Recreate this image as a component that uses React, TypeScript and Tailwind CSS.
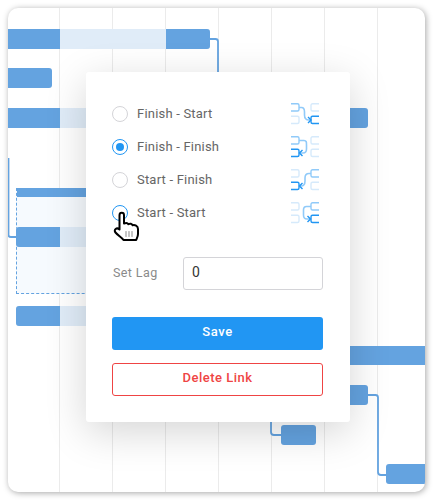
import React from "react";

const font = { fontFamily: 'Roboto, "Noto Sans", sans-serif' };

function LinkIcon({ kind }: { kind: 0 | 1 | 2 | 3 }) {
  const strong = "#2196f3";
  const mid = "#90caf9";
  const faint = "#d6eafb";
  const tl = kind === 0 || kind === 1 ? mid : faint;
  const bl = kind === 1 || kind === 2 ? strong : faint;
  const tr = kind === 2 || kind === 3 ? mid : faint;
  const br = kind === 0 || kind === 3 ? strong : faint;
  const leftBox = (y: number) => `M0 ${y}H6.5a1.5 1.5 0 0 1 1.5 1.5V${y + 5.8}a1.5 1.5 0 0 1-1.5 1.5H0`;
  const rightBox = (y: number) => `M28 ${y}H21.5a1.5 1.5 0 0 0-1.5 1.5V${y + 5.8}a1.5 1.5 0 0 0 1.5 1.5H28`;
  const curves = [
    "M8 4.5H10.5C13 4.5 13.5 6 13.5 9V12C13.5 15 15 17 18 17H20",
    "M8 4.5H13C15.5 4.5 15.5 6 15.5 9V13C15.5 16 14 17 12 17H8.5",
    "M20 4.5H18C15 4.5 14 6 14 9V12C14 15 13 17 10 17H8.5",
    "M20 4.5H15.5C13.5 4.5 12.5 6 12.5 8V13C12.5 16 14 17 16 17H19.5",
  ];
  const arrows = [
    "M17 14L20 17L17 20",
    "M11.5 14L8.5 17L11.5 20",
    "M11.5 14L8.5 17L11.5 20",
    "M16.5 14L19.5 17L16.5 20",
  ];
  return (
    <svg width="28" height="22" viewBox="0 0 28 22" fill="none" strokeWidth="1.4">
      <path d={leftBox(0.7)} stroke={tl} />
      <path d={leftBox(13.2)} stroke={bl} />
      <path d={rightBox(0.7)} stroke={tr} />
      <path d={rightBox(13.2)} stroke={br} />
      <path d={curves[kind]} stroke={mid} strokeWidth="1.6" />
      <path d={arrows[kind]} stroke={strong} />
    </svg>
  );
}

function Option({ label, kind, state }: { label: string; kind: 0 | 1 | 2 | 3; state: "off" | "on" | "hover" }) {
  return (
    <div className="flex h-[33px] items-center">
      {state === "off" && <span className="h-4 w-4 rounded-full border border-[#d4d4d8] bg-white" />}
      {state === "hover" && <span className="h-4 w-4 rounded-full border border-[#2196f3] bg-white" />}
      {state === "on" && (
        <span className="flex h-4 w-4 items-center justify-center rounded-full border border-[#2196f3] bg-white">
          <span className="h-2 w-2 rounded-full bg-[#2196f3]" />
        </span>
      )}
      <span className="ml-[9px] flex-1 pt-[1px] text-[13px] tracking-[0.2px] text-[#666666]">{label}</span>
      <span className="mr-[5px] flex">
        <LinkIcon kind={kind} />
      </span>
    </div>
  );
}

export default function App() {
  return (
    <div className="h-[500px] w-[433px] bg-white p-2" style={font}>
      <div className="relative h-full w-full overflow-hidden rounded-[10px] bg-white shadow-[1px_1px_6px_rgba(0,0,0,0.35)]">
        {/* grid columns */}
        <div className="flex h-full pl-[51px]">
          <div className="h-full w-[53px] border-l border-[#ebebeb]" />
          <div className="h-full w-[53px] border-l border-[#ebebeb]" />
          <div className="h-full w-[53px] border-l border-[#ebebeb]" />
          <div className="h-full w-[53px] border-l border-[#ebebeb]" />
          <div className="h-full w-[53px] border-l border-[#ebebeb]" />
          <div className="h-full w-[53px] border-l border-[#ebebeb]" />
          <div className="h-full w-[48px] border-l border-[#ebebeb]" />
        </div>

        <div className="absolute left-0 top-[21px] flex h-5 w-[202px] overflow-hidden rounded-r-[3px] bg-[#e0ecf8]">
          <div className="w-[52px] bg-[#64a3e0]" />
          <div className="flex-1" />
          <div className="w-11 bg-[#64a3e0]" />
        </div>
        <div className="absolute left-0 top-[60px] h-5 w-11 rounded-r-[3px] bg-[#64a3e0]" />
        <div className="absolute left-0 top-[100px] flex h-5 w-[300px] bg-[#e0ecf8]">
          <div className="w-[52px] bg-[#64a3e0]" />
        </div>
        <div className="absolute left-[342px] top-[100px] h-5 w-[18px] rounded-r-[3px] bg-[#64a3e0]" />

        <div className="absolute left-2 top-[180px] h-[106px] w-[200px] border-b border-l border-dashed border-[#64a3e0] bg-[#f6fafe]">
          <div className="h-[9px] bg-[#64a3e0]" />
        </div>
        <div className="absolute left-2 top-[219px] flex h-5 w-[200px] rounded-l-[3px] bg-[#e0ecf8]">
          <div className="w-11 rounded-l-[3px] bg-[#64a3e0]" />
        </div>
        <div className="absolute left-2 top-[298px] flex h-5 w-[200px] rounded-l-[3px] bg-[#e0ecf8]">
          <div className="w-11 rounded-l-[3px] bg-[#64a3e0]" />
        </div>

        <div className="absolute left-[300px] top-[338px] h-[19px] w-[120px] bg-[#64a3e0]" />
        <div className="absolute left-[330px] top-[377px] h-5 w-[30px] rounded-r-[3px] bg-[#64a3e0]" />
        <div className="absolute left-[273px] top-[417px] h-5 w-[35px] rounded-[3px] bg-[#64a3e0]" />
        <div className="absolute left-[378px] top-[456px] h-5 w-[50px] rounded-l-[3px] bg-[#64a3e0]" />

        {/* connectors */}
        <svg className="absolute left-0 top-0" width="417" height="484" fill="none" stroke="#64a3e0" strokeWidth="1.8">
          <path d="M202 31H207.5Q210 31 210 33.5V70" />
          <path d="M0.5 150V227Q0.5 229 3 229H8" />
          <path d="M360 387H367.5Q370 387 370 389.5V464Q370 467 373 467H378" />
          <path d="M263 410V424Q263 427 266 427H273" />
        </svg>

        {/* dialog */}
        <div className="absolute left-[78px] top-[64px] h-[350px] w-[264px] rounded-[3px] bg-white px-[26px] pt-[25px] shadow-[0_10px_40px_rgba(0,0,0,0.17)]">
          <Option label="Finish - Start" kind={0} state="off" />
          <Option label="Finish - Finish" kind={1} state="on" />
          <Option label="Start - Finish" kind={2} state="off" />
          <Option label="Start - Start" kind={3} state="hover" />

          <div className="mt-[28px] flex items-center">
            <span className="w-[71px] pl-px text-[12.5px] tracking-[0.4px] text-[#8a8a8a]">Set Lag</span>
            <div className="flex h-[33px] w-[140px] items-center rounded-[3px] border border-[#d4d4d8] pb-[2px] pl-[8px] text-[14px] text-[#333333]">
              0
            </div>
          </div>

          <div className="mt-[27px] flex h-[33px] w-[211px] items-center justify-center rounded-[3px] bg-[#2196f3] pb-[4px] text-[13px] font-medium tracking-[0.6px] text-white">
            Save
          </div>
          <div className="mt-[13px] flex h-[33px] w-[211px] items-center justify-center rounded-[3px] border border-[#ef4444] pb-[4px] text-[13px] font-medium tracking-[0.5px] text-[#ef4444]">
            Delete Link
          </div>
        </div>

        {/* pointer cursor */}
        <svg className="absolute left-[104px] top-[203px]" width="30" height="32" viewBox="0 0 30 32" fill="#fff" stroke="#000" strokeWidth="2" strokeLinejoin="round" strokeLinecap="round">
          <path d="M7.5 18.5V4.2C7.5 1 12 1 12 4.2V12.5C14 11.6 15.6 11.8 16.4 13.2C18 12.3 19.8 12.6 20.6 14.2C22.6 13.6 26 14.4 26 18V23C26 25.5 25 27 24.2 29H11.5C10 26.5 6 24.5 3.5 21.5C1.2 18.8 4.8 15.8 7.5 18.5Z" />
          <path d="M14 20.5V25.5M17 20.5V25.5M20 20.5V25.5" stroke="#8a8a8a" strokeWidth="1" />
        </svg>
      </div>
    </div>
  );
}
